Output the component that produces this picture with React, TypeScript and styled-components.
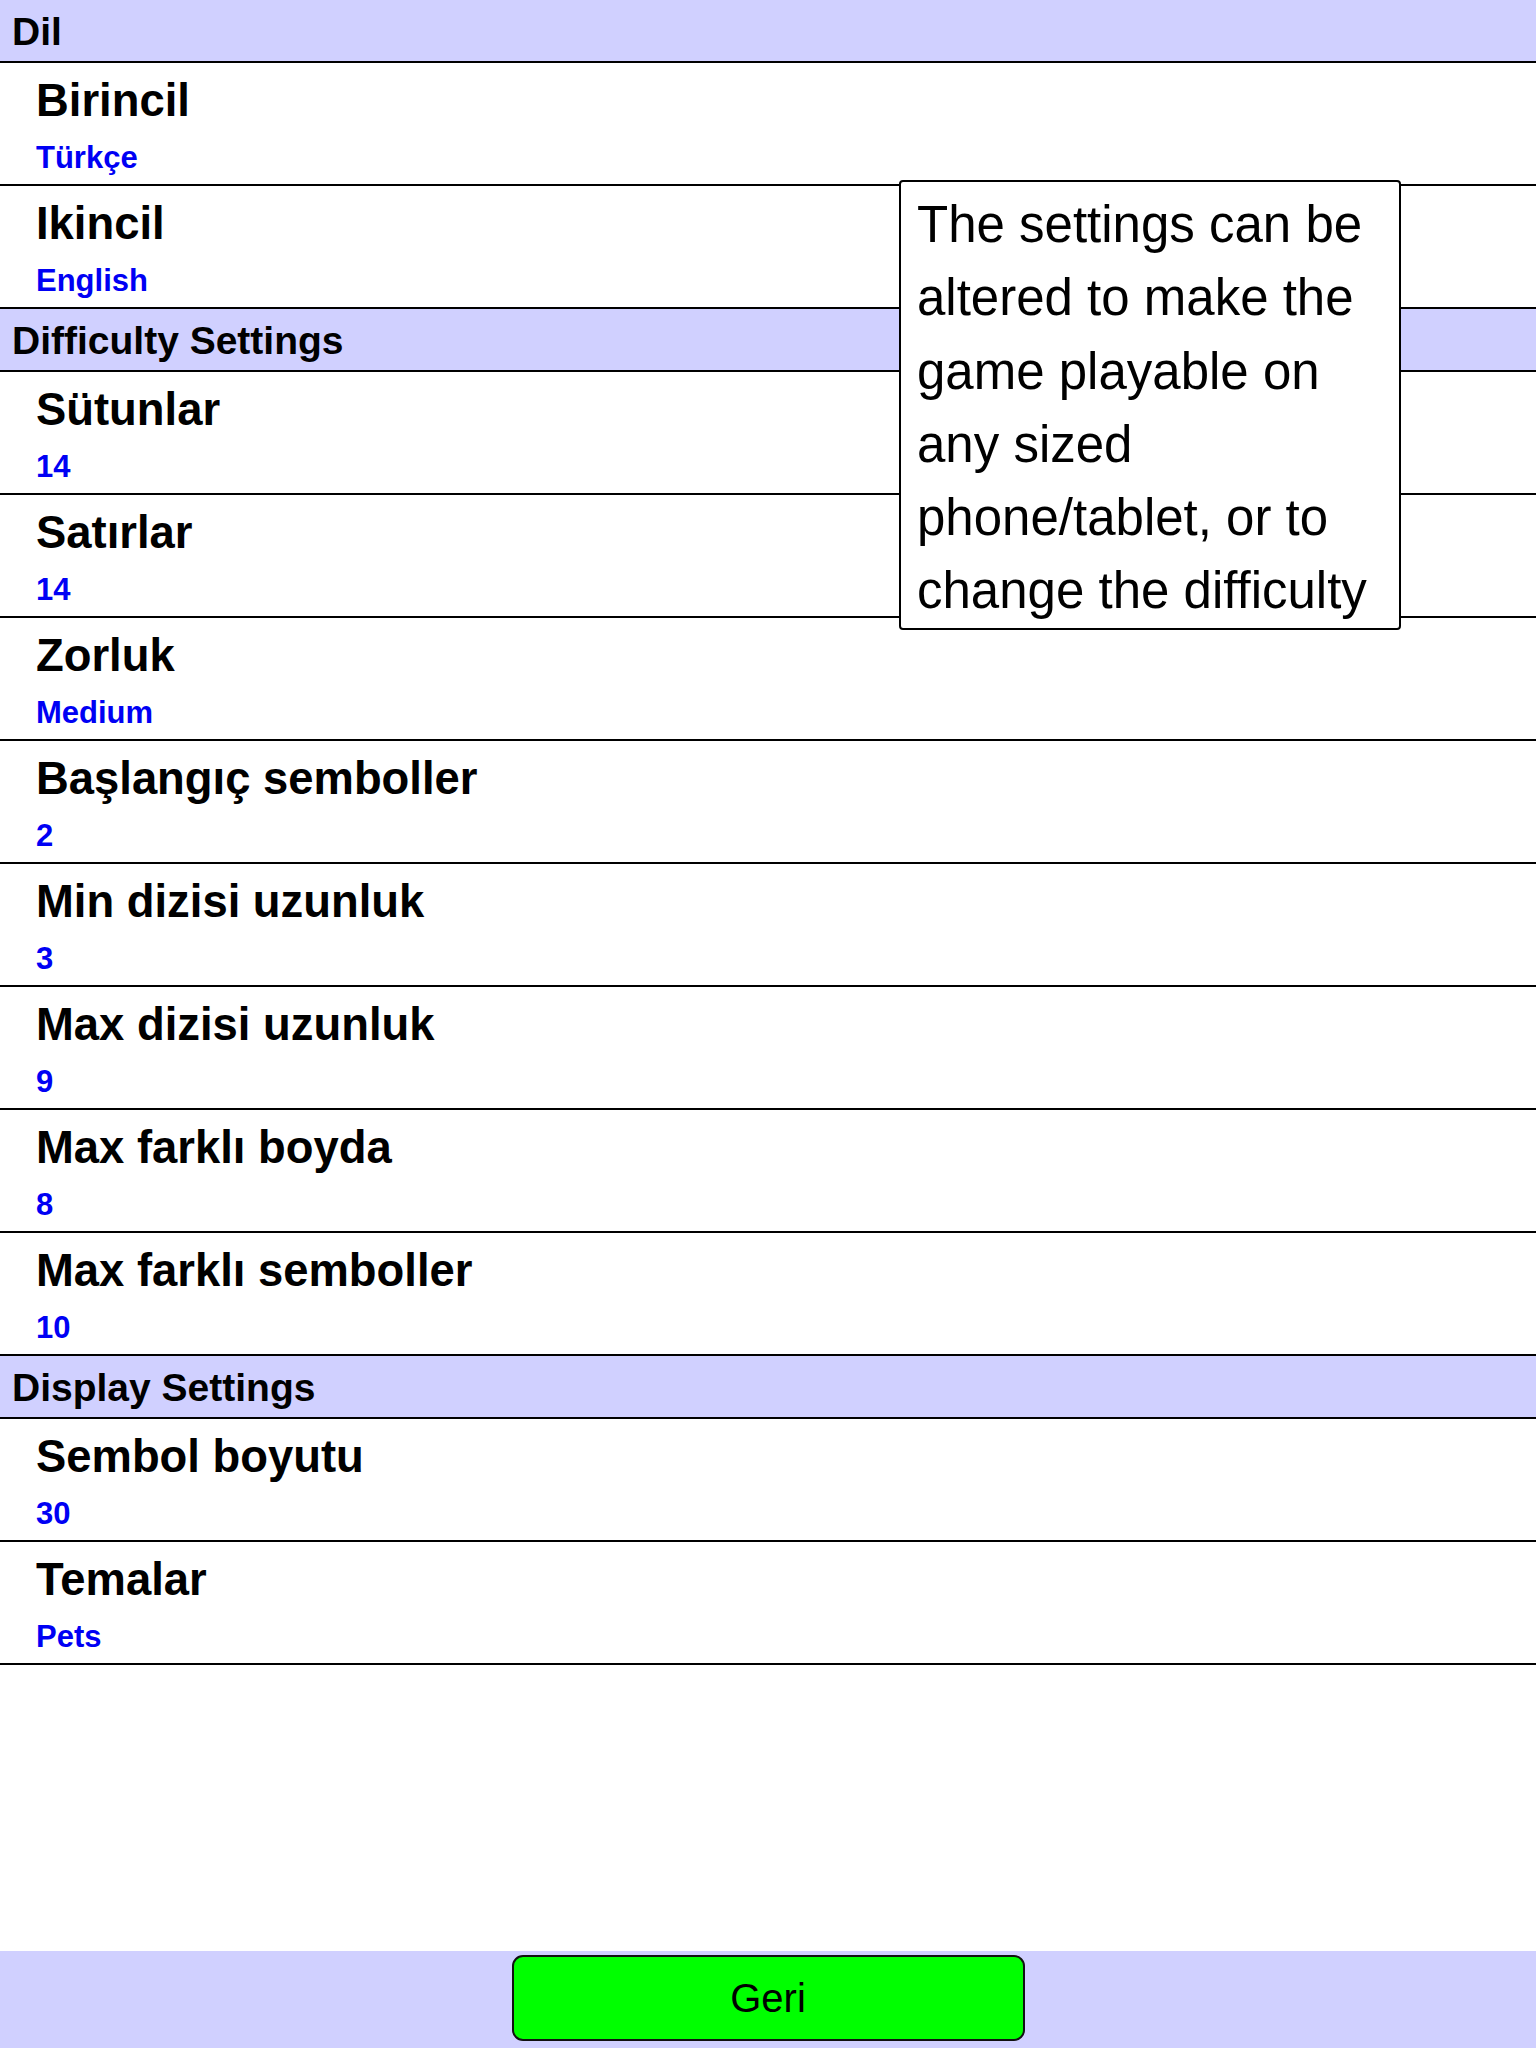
import React from "react";
import styled, { createGlobalStyle } from "styled-components";

type SettingPropsType = {
  title: string;
  value: string;
};

type SectionPropsType = {
  title: string;
  items: SettingPropsType[];
};

const sections: SectionPropsType[] = [
  {
    title: "Dil",
    items: [
      { title: "Birincil", value: "Türkçe" },
      { title: "Ikincil", value: "English" },
    ],
  },
  {
    title: "Difficulty Settings",
    items: [
      { title: "Sütunlar", value: "14" },
      { title: "Satırlar", value: "14" },
      { title: "Zorluk", value: "Medium" },
      { title: "Başlangıç semboller", value: "2" },
      { title: "Min dizisi uzunluk", value: "3" },
      { title: "Max dizisi uzunluk", value: "9" },
      { title: "Max farklı boyda", value: "8" },
      { title: "Max farklı semboller", value: "10" },
    ],
  },
  {
    title: "Display Settings",
    items: [
      { title: "Sembol boyutu", value: "30" },
      { title: "Temalar", value: "Pets" },
    ],
  },
];

const GlobalStyle = createGlobalStyle`
  * {
    box-sizing: border-box;
  }
  body {
    margin: 0;
    background: #ffffff;
    font-family: "Liberation Sans", Arial, sans-serif;
  }
`;

const Setting = (props: SettingPropsType) => {
  return (
    <Row>
      <RowTitle>{props.title}</RowTitle>
      <RowValue>{props.value}</RowValue>
    </Row>
  );
};

export default function App() {
  return (
    <Page>
      <GlobalStyle />
      <List>
        {sections.map((section) => (
          <Section key={section.title}>
            <SectionHeader>{section.title}</SectionHeader>
            {section.items.map((item) => (
              <Setting key={item.title} title={item.title} value={item.value} />
            ))}
          </Section>
        ))}
      </List>
      <Tooltip>
        The settings can be altered to make the game playable on any sized
        phone/tablet, or to change the difficulty
      </Tooltip>
      <BottomBar>
        <BackButton>Geri</BackButton>
      </BottomBar>
    </Page>
  );
}

const Page = styled.div`
  position: relative;
  display: flex;
  flex-direction: column;
  min-height: 100vh;
`;

const List = styled.ul`
  flex: 1;
  margin: 0;
  padding: 0;
  list-style: none;
`;

const Section = styled.li`
  display: flex;
  flex-direction: column;
`;

const SectionHeader = styled.div`
  display: flex;
  align-items: center;
  height: 63px;
  padding: 2px 0 0 12px;
  background: #d0d0ff;
  border-bottom: 2px solid #000000;
  font-size: 39px;
  font-weight: 700;
  color: #000000;
`;

const Row = styled.div`
  display: flex;
  flex-direction: column;
  gap: 13px;
  height: 123px;
  padding: 12px 0 9px 36px;
  border-bottom: 2px solid #000000;
`;

const RowTitle = styled.span`
  font-size: 45.4px;
  font-weight: 700;
  line-height: 52px;
  color: #000000;
`;

const RowValue = styled.span`
  font-size: 31px;
  font-weight: 700;
  line-height: 35px;
  color: #0000f4;
`;

const Tooltip = styled.div`
  position: absolute;
  top: 180px;
  left: 899px;
  width: 502px;
  height: 450px;
  padding: 6px 16px 0;
  background: #ffffff;
  border: 2px solid #000000;
  border-radius: 4px;
  font-size: 51px;
  line-height: 73.3px;
  color: #000000;
`;

const BottomBar = styled.div`
  display: flex;
  justify-content: center;
  align-items: flex-start;
  height: 97px;
  padding-top: 4px;
  background: #d0d0ff;
`;

const BackButton = styled.button`
  display: flex;
  justify-content: center;
  align-items: center;
  width: 513px;
  height: 86px;
  padding: 0;
  background: #00ff00;
  border: 2px solid #111111;
  border-radius: 11px;
  font-family: "Liberation Sans", Arial, sans-serif;
  font-size: 40px;
  color: #000000;
`;
